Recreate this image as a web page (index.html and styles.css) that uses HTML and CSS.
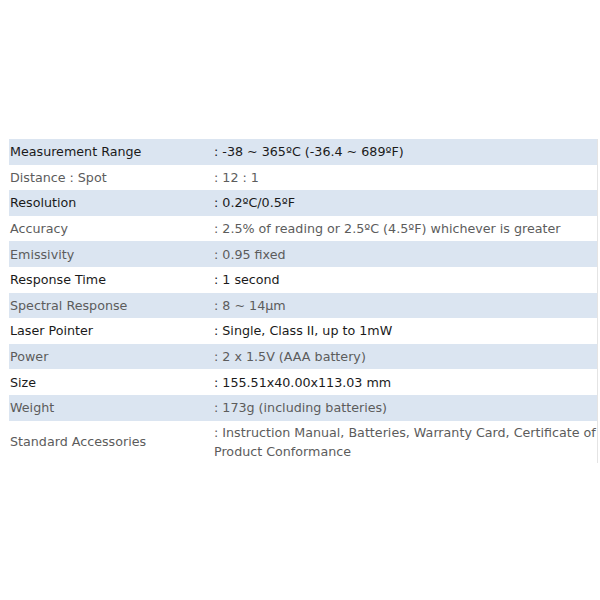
FILE: index.html
```html
<!DOCTYPE html>
<html>
<head>
<meta charset="utf-8">
<link rel="stylesheet" href="styles.css">
</head>
<body>
<div class="page">
  <table class="specs">
    <tr class="alt dark"><td class="k">Measurement Range</td><td class="v">: -38 ~ 365ºC (-36.4 ~ 689ºF)</td></tr>
    <tr class="gray"><td class="k">Distance : Spot</td><td class="v">: 12 : 1</td></tr>
    <tr class="alt dark"><td class="k">Resolution</td><td class="v">: 0.2ºC/0.5ºF</td></tr>
    <tr class="gray"><td class="k">Accuracy</td><td class="v">: 2.5% of reading or 2.5ºC (4.5ºF) whichever is greater</td></tr>
    <tr class="alt gray"><td class="k">Emissivity</td><td class="v">: 0.95 fixed</td></tr>
    <tr class="dark"><td class="k">Response Time</td><td class="v">: 1 second</td></tr>
    <tr class="alt gray"><td class="k">Spectral Response</td><td class="v">: 8 ~ 14μm</td></tr>
    <tr class="dark"><td class="k">Laser Pointer</td><td class="v">: Single, Class II, up to 1mW</td></tr>
    <tr class="alt gray"><td class="k">Power</td><td class="v">: 2 x 1.5V (AAA battery)</td></tr>
    <tr class="dark"><td class="k">Size</td><td class="v">: 155.51x40.00x113.03 mm</td></tr>
    <tr class="alt gray"><td class="k">Weight</td><td class="v">: 173g (including batteries)</td></tr>
    <tr class="gray tall"><td class="k">Standard Accessories</td><td class="v">: Instruction Manual, Batteries, Warranty Card, Certificate of Product Conformance</td></tr>
  </table>
</div>
</body>
</html>
```

FILE: styles.css
```css
html, body {
  margin: 0;
  padding: 0;
  background: #ffffff;
}
.page {
  padding: 139px 0 0 9px;
  width: 589px;
}
.specs {
  width: 589px;
  border-collapse: collapse;
  border-right: 1px solid #e4e4e4;
  font-family: "DejaVu Sans", Verdana, sans-serif;
  font-size: 12.7px;
  table-layout: fixed;
}
.specs td {
  height: 25.6px;
  padding: 0 0 0 1px;
  vertical-align: middle;
  line-height: 19px;
}
.specs td.k {
  width: 203px;
}
.specs tr.alt td {
  background: #dbe5f1;
}
.specs tr.dark td {
  color: #1a1a1a;
}
.specs tr.gray td {
  color: #5c5c5c;
}
.specs tr.tall td {
  height: 40px;
  padding-top: 1px;
  padding-bottom: 1px;
}
```
